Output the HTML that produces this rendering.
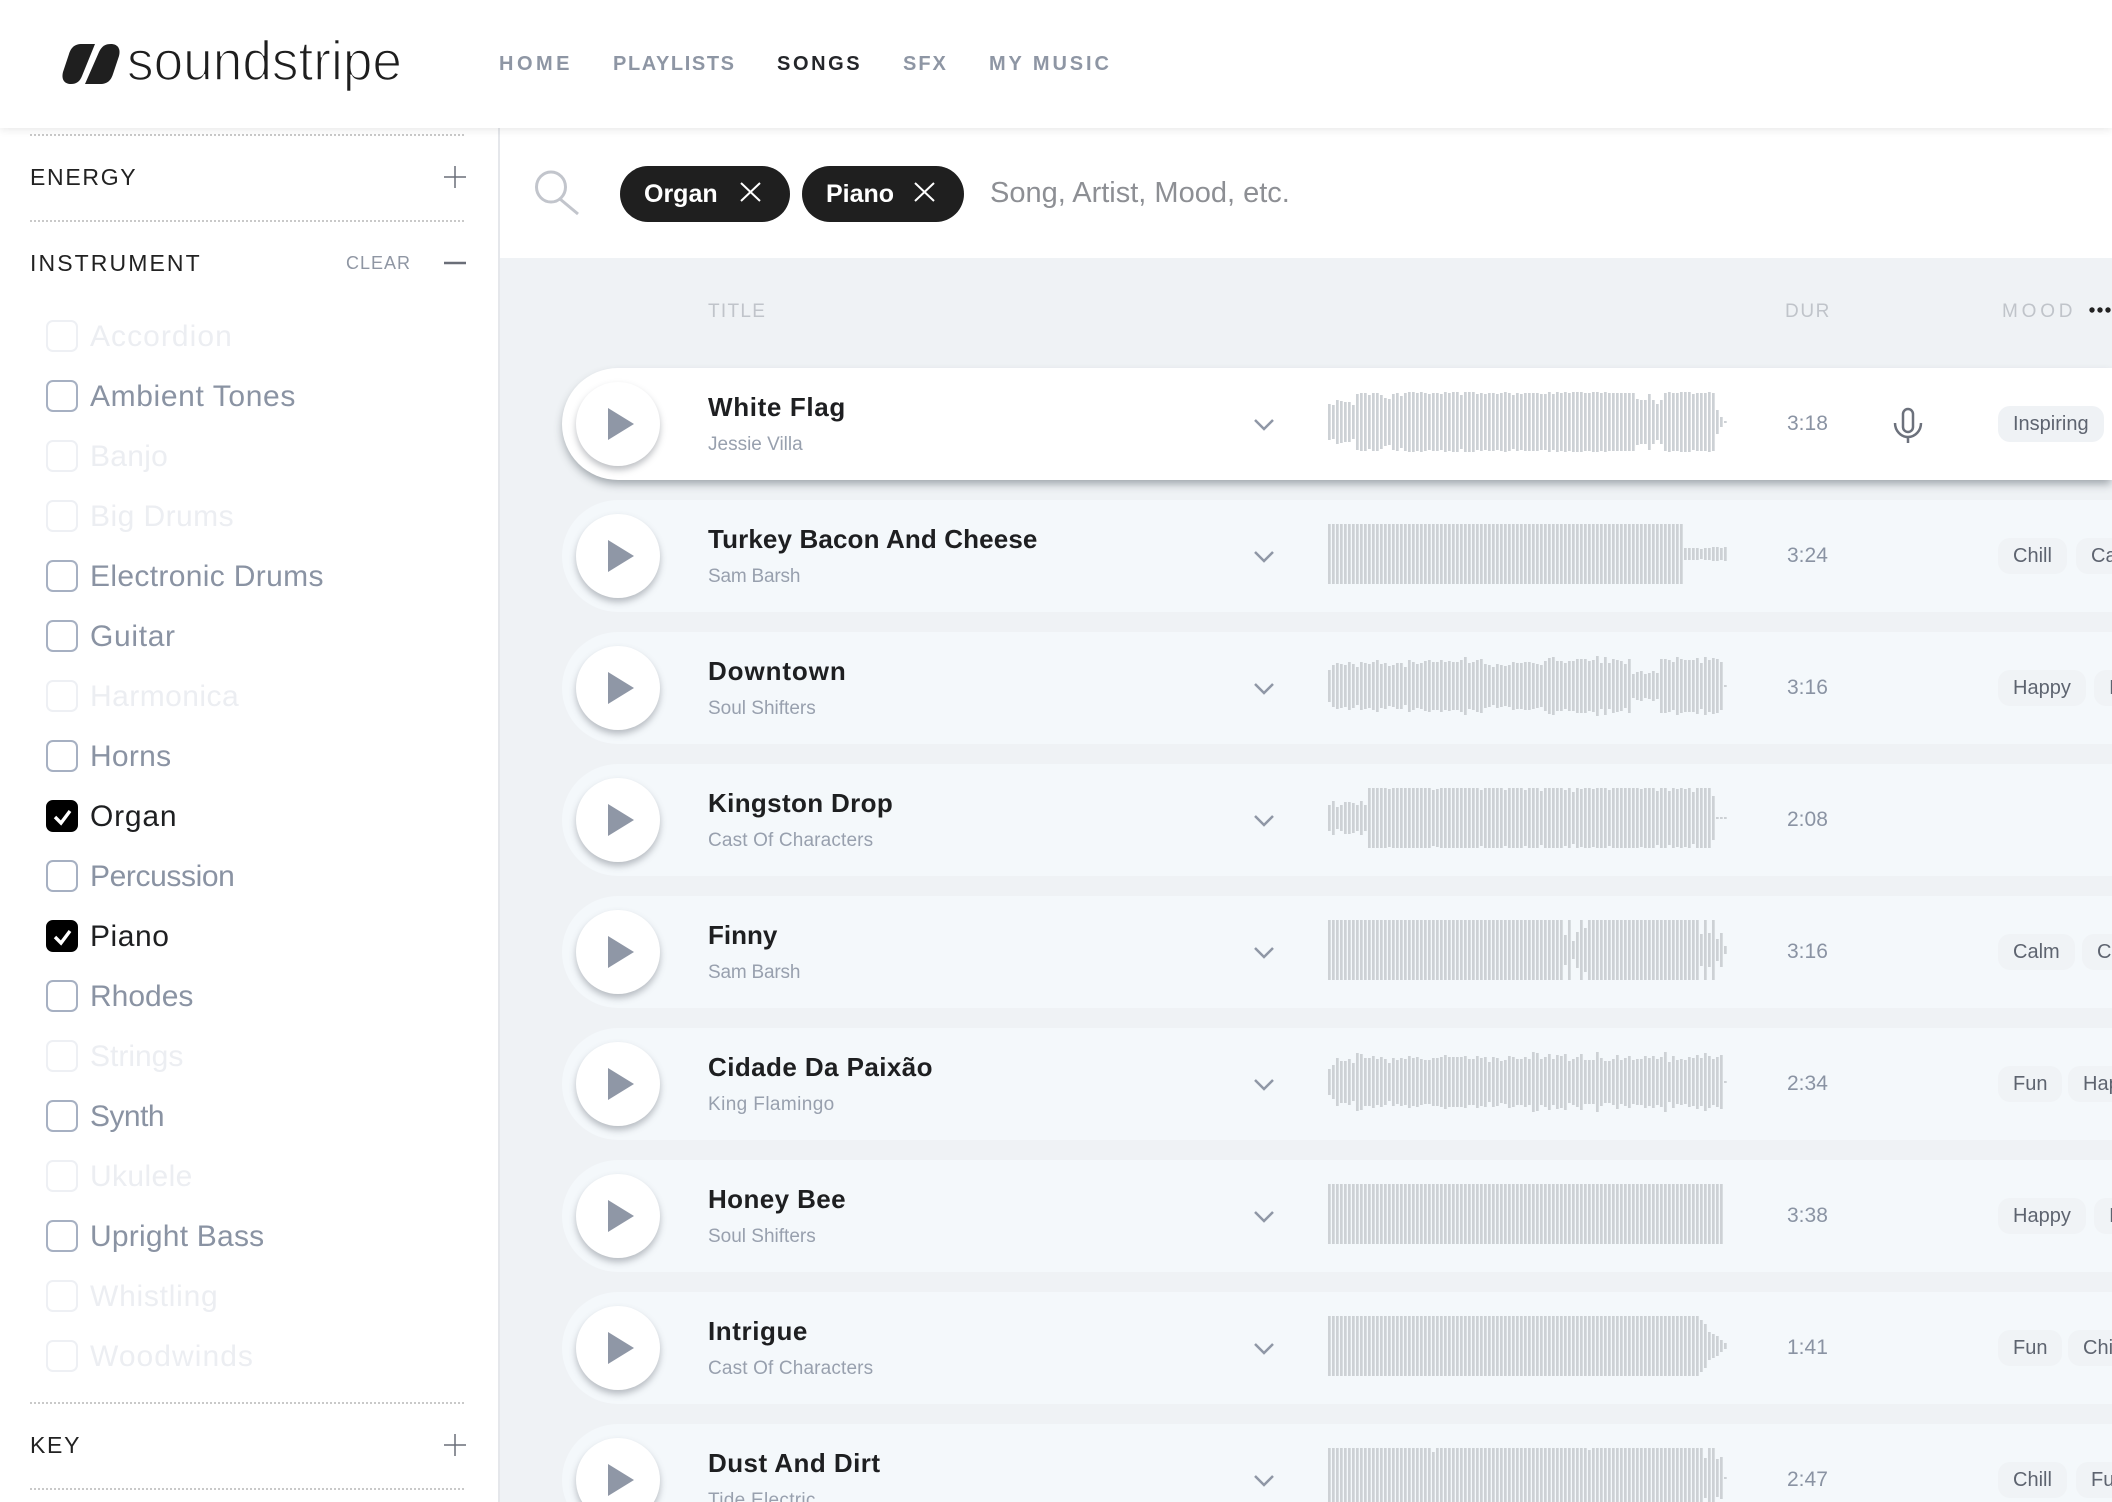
<!DOCTYPE html>
<html lang="en">
<head>
<meta charset="utf-8">
<title>Soundstripe Songs</title>
<style>
html,body{margin:0;padding:0;width:2112px;height:1502px;overflow:hidden;background:#fff;font-family:"Liberation Sans",Arial,sans-serif}
#page{position:relative;width:2112px;height:1502px;overflow:hidden;background:#eff2f5}
.t{position:absolute;white-space:nowrap;line-height:1}
#hdr{position:absolute;left:0;top:0;width:2112px;height:128px;background:#fff;box-shadow:0 2px 8px rgba(0,0,0,.09);z-index:5}
.nav{font-size:20px;font-weight:bold;color:#8e96a4;top:54px}
#side{position:absolute;left:0;top:128px;width:498px;height:1374px;background:#fff;border-right:2px solid #e5e7eb}
#bar{position:absolute;left:500px;top:128px;width:1612px;height:130px;background:#fff}
.dot{position:absolute;left:30px;width:436px;height:2px;background:repeating-linear-gradient(90deg,#c9c9c9 0 2px,transparent 2px 4px)}
.h{font-size:23px;letter-spacing:1.7px;color:#222;left:30px}
.box{position:absolute;left:46px;width:32px;height:32px;box-sizing:border-box;border:2px solid #a6b0c2;border-radius:7px}
.off{border-color:#eef0f4}
.on{background:#000;border-color:#000}
.i{font-size:30px;left:90px;color:#8a93a3}
.d{color:#eceef2}
.k{color:#1e1f21}
.chip{position:absolute;top:166px;height:56px;border-radius:28px;background:#1f1f1f}
.chip span{position:absolute;top:16px;font-size:25px;line-height:1;font-weight:bold;color:#fff;white-space:nowrap}
.th{font-size:19px;color:#c0c4ca;top:302px}
.row{position:absolute;left:562px;width:1550px;height:112px;border-radius:56px 0 0 56px;background:#f4f8fb}
.sel{background:#fff;box-shadow:0 5px 9px -1px rgba(60,70,80,.45)}
.c{position:absolute;left:14px;top:14px;width:84px;height:84px;border-radius:50%;background:#fff;box-shadow:0 4px 7px rgba(70,75,85,.35)}
.title{left:146px;top:26px;font-size:26px;font-weight:bold;color:#1e1f21}
.sub{left:146px;top:67px;font-size:19px;color:#98a0ae}
.dur{left:1225px;top:45px;font-size:21px;color:#8a93a3}
.tag{position:absolute;top:38px;height:36px;border-radius:12px;background:#f0f3f6;color:#5e6470;font-size:20px;line-height:36px;padding:0 15px;white-space:nowrap}
#ov{position:absolute;left:0;top:0;z-index:3}
.w{fill:none;stroke:#cdd1d5;stroke-width:2.7}
.f{fill:none;stroke:#cdd1d5;stroke-width:60;stroke-dasharray:2.7 1.3}
</style>
</head>
<body>
<div id="page">

<div id="hdr">
<svg width="500" height="128" style="position:absolute;left:0;top:0">
<path fill="#1f1f1f" d="M95 44L82 44C74 44 71 48 69 54L63 72C61 80 65 84 71 84C77 84 80 81 82 76Z"/>
<path fill="#1f1f1f" d="M85 84L100 84C108 84 111 80 113 74L119 56C121 48 117 44 111 44C105 44 102 46 99 52Z"/>
<text x="127" y="80" font-family="Liberation Sans, sans-serif" font-size="56" textLength="275" lengthAdjust="spacingAndGlyphs" fill="#1e1e1e" stroke="#fff" stroke-width="1.6">soundstripe</text>
</svg>
<div class="t nav" style="left:499px;letter-spacing:3.5px">HOME</div>
<div class="t nav" style="left:613px;letter-spacing:1.6px">PLAYLISTS</div>
<div class="t nav" style="left:777px;letter-spacing:2.6px;color:#24262a">SONGS</div>
<div class="t nav" style="left:903px;letter-spacing:2px">SFX</div>
<div class="t nav" style="left:989px;letter-spacing:2.9px">MY MUSIC</div>
</div>

<div id="side"></div>
<div id="bar"></div>

<div class="dot" style="top:134px"></div>
<div class="t h" style="top:166px">ENERGY</div>
<div class="dot" style="top:220px"></div>
<div class="t h" style="top:252px;letter-spacing:2.1px">INSTRUMENT</div>
<div class="t" style="left:346px;top:254px;font-size:18px;letter-spacing:1px;color:#8f96a3">CLEAR</div>

<div class="box off" style="top:320px"></div><div class="t i d" style="top:322px;letter-spacing:1.05px">Accordion</div>
<div class="box" style="top:380px"></div><div class="t i" style="top:382px;letter-spacing:.62px">Ambient Tones</div>
<div class="box off" style="top:440px"></div><div class="t i d" style="top:442px;letter-spacing:.27px">Banjo</div>
<div class="box off" style="top:500px"></div><div class="t i d" style="top:502px;letter-spacing:.45px">Big Drums</div>
<div class="box" style="top:560px"></div><div class="t i" style="top:562px;letter-spacing:.34px">Electronic Drums</div>
<div class="box" style="top:620px"></div><div class="t i" style="top:622px;letter-spacing:.67px">Guitar</div>
<div class="box off" style="top:680px"></div><div class="t i d" style="top:682px;letter-spacing:.45px">Harmonica</div>
<div class="box" style="top:740px"></div><div class="t i" style="top:742px;letter-spacing:.27px">Horns</div>
<div class="box on" style="top:800px"></div><div class="t i k" style="top:802px;letter-spacing:.8px">Organ</div>
<div class="box" style="top:860px"></div><div class="t i" style="top:862px;letter-spacing:-.4px">Percussion</div>
<div class="box on" style="top:920px"></div><div class="t i k" style="top:922px;letter-spacing:.54px">Piano</div>
<div class="box" style="top:980px"></div><div class="t i" style="top:982px">Rhodes</div>
<div class="box off" style="top:1040px"></div><div class="t i d" style="top:1042px">Strings</div>
<div class="box" style="top:1100px"></div><div class="t i" style="top:1102px;letter-spacing:-.54px">Synth</div>
<div class="box off" style="top:1160px"></div><div class="t i d" style="top:1162px;letter-spacing:.38px">Ukulele</div>
<div class="box" style="top:1220px"></div><div class="t i" style="top:1222px;letter-spacing:.22px">Upright Bass</div>
<div class="box off" style="top:1280px"></div><div class="t i d" style="top:1282px;letter-spacing:.75px">Whistling</div>
<div class="box off" style="top:1340px"></div><div class="t i d" style="top:1342px;letter-spacing:1.05px">Woodwinds</div>

<div class="dot" style="top:1402px"></div>
<div class="t h" style="top:1434px">KEY</div>
<div class="dot" style="top:1488px"></div>

<div class="chip" style="left:620px;width:170px"><span style="left:24px">Organ</span></div>
<div class="chip" style="left:802px;width:162px"><span style="left:24px">Piano</span></div>
<div class="t" style="left:990px;top:179px;font-size:29px;color:#8d8f94">Song, Artist, Mood, etc.</div>

<div class="t th" style="left:708px;letter-spacing:1.3px">TITLE</div>
<div class="t th" style="left:1785px;letter-spacing:1.6px">DUR</div>
<div class="t th" style="left:2002px;letter-spacing:3.8px">MOOD</div>

<div class="row sel" style="top:368px"><div class="c"></div><div class="t title" style="letter-spacing:.65px">White Flag</div><div class="t sub">Jessie Villa</div><div class="t dur">3:18</div><div class="tag" style="left:1436px;background:#eff2f5">Inspiring</div></div>
<div class="row" style="top:500px"><div class="c"></div><div class="t title" style="letter-spacing:.13px">Turkey Bacon And Cheese</div><div class="t sub" style="letter-spacing:-.2px">Sam Barsh</div><div class="t dur">3:24</div><div class="tag" style="left:1436px">Chill</div><div class="tag" style="left:1514px">Calm</div></div>
<div class="row" style="top:632px"><div class="c"></div><div class="t title" style="letter-spacing:.9px">Downtown</div><div class="t sub">Soul Shifters</div><div class="t dur">3:16</div><div class="tag" style="left:1436px">Happy</div><div class="tag" style="left:1532px">Inspiring</div></div>
<div class="row" style="top:764px"><div class="c"></div><div class="t title" style="letter-spacing:.35px">Kingston Drop</div><div class="t sub" style="letter-spacing:.15px">Cast Of Characters</div><div class="t dur">2:08</div></div>
<div class="row" style="top:896px"><div class="c"></div><div class="t title">Finny</div><div class="t sub" style="letter-spacing:-.2px">Sam Barsh</div><div class="t dur">3:16</div><div class="tag" style="left:1436px">Calm</div><div class="tag" style="left:1520px">Chill</div></div>
<div class="row" style="top:1028px"><div class="c"></div><div class="t title" style="letter-spacing:.42px">Cidade Da Paixão</div><div class="t sub" style="letter-spacing:.4px">King Flamingo</div><div class="t dur">2:34</div><div class="tag" style="left:1436px">Fun</div><div class="tag" style="left:1506px">Happy</div></div>
<div class="row" style="top:1160px"><div class="c"></div><div class="t title" style="letter-spacing:.4px">Honey Bee</div><div class="t sub">Soul Shifters</div><div class="t dur">3:38</div><div class="tag" style="left:1436px">Happy</div><div class="tag" style="left:1532px">Inspiring</div></div>
<div class="row" style="top:1292px"><div class="c"></div><div class="t title" style="letter-spacing:.58px">Intrigue</div><div class="t sub" style="letter-spacing:.15px">Cast Of Characters</div><div class="t dur">1:41</div><div class="tag" style="left:1436px">Fun</div><div class="tag" style="left:1506px">Chill</div></div>
<div class="row" style="top:1424px"><div class="c"></div><div class="t title" style="letter-spacing:.45px">Dust And Dirt</div><div class="t sub" style="letter-spacing:.3px">Tide Electric</div><div class="t dur">2:47</div><div class="tag" style="left:1436px">Chill</div><div class="tag" style="left:1514px">Fun</div></div>

<svg id="ov" width="2112" height="1502" viewBox="0 0 2112 1502">
<defs>
<g id="pc">
<path d="M608 40L634 56L608 72Z" fill="#8f97a6"/>
<path d="M1255 52L1264 61L1273 52" fill="none" stroke="#8f97a6" stroke-width="2.5"/>
</g>
</defs>

<!-- sidebar icons -->
<path d="M444 177H466M455 166V188" stroke="#6a6e78" stroke-width="1.5" fill="none"/>
<path d="M444 263H466" stroke="#6a6e78" stroke-width="2.5" fill="none"/>
<path d="M444 1445H466M455 1434V1456" stroke="#6a6e78" stroke-width="1.5" fill="none"/>
<path d="M55 817L61 823L70 811" fill="none" stroke="#fff" stroke-width="3.4"/>
<path d="M55 937L61 943L70 931" fill="none" stroke="#fff" stroke-width="3.4"/>

<!-- search -->
<ellipse cx="551" cy="187" rx="14.5" ry="15" fill="none" stroke="#c2c5cc" stroke-width="3"/>
<path d="M560 199L578 214" stroke="#c2c5cc" stroke-width="3" fill="none"/>
<path d="M741 183L760 201M760 183L741 201" stroke="#fff" stroke-width="2" fill="none"/>
<path d="M915 183L934 201M934 183L915 201" stroke="#fff" stroke-width="2" fill="none"/>

<!-- dots -->
<circle cx="2092" cy="310" r="2.7" fill="#222"/><circle cx="2100" cy="310" r="2.7" fill="#222"/><circle cx="2108" cy="310" r="2.7" fill="#222"/>

<!-- mic -->
<rect x="1903" y="409" width="10" height="23" rx="5" fill="none" stroke="#6c717c" stroke-width="2.5"/>
<path d="M1895 423a13 14 0 0 0 26 0M1908 437V443" fill="none" stroke="#6c717c" stroke-width="2.5"/>

<!-- play + chevrons -->
<use href="#pc" transform="translate(0 368)"/>
<use href="#pc" transform="translate(0 500)"/>
<use href="#pc" transform="translate(0 632)"/>
<use href="#pc" transform="translate(0 764)"/>
<use href="#pc" transform="translate(0 896)"/>
<use href="#pc" transform="translate(0 1028)"/>
<use href="#pc" transform="translate(0 1160)"/>
<use href="#pc" transform="translate(0 1292)"/>
<use href="#pc" transform="translate(0 1424)"/>

<!-- row 1 wave -->
<g transform="translate(1329.35 422)"><path class="w" d="M0-18V18M4-17V17M8-22V22M12-21V21M16-20V20M20-20V20M24-17V17M28-28V28M32-29V29M36-29V29M40-27V27M44-29V29M48-29V29M52-27V27M56-24V24M60-23V23M64-28V28M68-29V29M72-26V26M76-29V29M80-30V30M84-30V30M88-29V29M92-30V30M96-29V29M100-28V28M104-29V29M108-29V29M112-28V28M116-30V30M120-29V29M124-30V30M128-30V30M132-27V27M136-30V30M140-30V30M144-30V30M148-28V28M152-29V29M156-28V28M160-29V29M164-29V29M168-28V28M172-29V29M176-30V30M180-29V29M184-27V27M188-29V29M192-28V28M196-29V29M200-29V29M204-29V29M208-29V29M212-28V28M216-28V28M220-30V30M224-28V28M228-30V30M232-29V29M236-30V30M240-29V29M244-30V30M248-30V30M252-30V30M256-29V29M260-29V29M264-30V30M268-30V30M272-29V29M276-30V30M280-29V29M284-29V29M288-29V29M292-29V29M296-29V29M300-29V29M304-29V29M308-23V23M312-22V22M316-22V22M320-28V28M324-22V22M328-18V18M332-22V22M336-29V29M340-30V30M344-29V29M348-29V29M352-30V30M356-30V30M360-30V30M364-28V28M368-29V29M372-29V29M376-29V29M380-30V30M384-29V29M388-12V12M392-5V5M396-1V1"/></g>

<!-- row 2 wave -->
<g transform="translate(1329.35 554)"><path class="f" transform="translate(-1.35)" d="M0 0H356"/><path class="w" d="M356-6V6M360-6V6M364-6V6M368-6V6M372-5V5M376-6V6M380-6V6M384-7V7M388-7V7M392-6V6M396-7V7"/></g>

<!-- row 3 wave -->
<g transform="translate(1329.35 686)"><path class="w" d="M0-16V16M4-21V21M8-23V23M12-22V22M16-21V21M20-24V24M24-22V22M28-19V19M32-24V24M36-23V23M40-22V22M44-24V24M48-26V26M52-22V22M56-23V23M60-20V20M64-21V21M68-23V23M72-23V23M76-19V19M80-26V26M84-24V24M88-22V22M92-23V23M96-25V25M100-26V26M104-24V24M108-24V24M112-26V26M116-24V24M120-25V25M124-24V24M128-24V24M132-26V26M136-29V29M140-23V23M144-24V24M148-26V26M152-27V27M156-22V22M160-21V21M164-19V19M168-22V22M172-21V21M176-20V20M180-21V21M184-24V24M188-23V23M192-23V23M196-24V24M200-24V24M204-23V23M208-22V22M212-21V21M216-25V25M220-28V28M224-29V29M228-25V25M232-25V25M236-23V23M240-25V25M244-25V25M248-27V27M252-27V27M256-27V27M260-25V25M264-26V26M268-30V30M272-23V23M276-29V29M280-23V23M284-27V27M288-26V26M292-25V25M296-22V22M300-27V27M304-12V12M308-14V14M312-15V15M316-12V12M320-13V13M324-15V15M328-13V13M332-27V27M336-27V27M340-26V26M344-24V24M348-29V29M352-27V27M356-26V26M360-26V26M364-26V26M368-28V28M372-23V23M376-29V29M380-26V26M384-28V28M388-27V27M392-24V24M396-1V1"/></g>

<!-- row 4 wave -->
<g transform="translate(1329.35 818)"><path class="f" transform="translate(-1.35)" d="M40 0H60M64 0H104M112 0H152M156 0H176M180 0H196M200 0H212M216 0H236M240 0H244M248 0H252M256 0H264M268 0H280M284 0H312M316 0H328M332 0H340M344 0H348M352 0H356M360 0H364M368 0H384"/><path class="w" d="M0-13V13M4-17V17M8-11V11M12-13V13M16-16V16M20-16V16M24-15V15M28-13V13M32-17V17M36-13V13M60-29V29M104-28V28M108-29V29M152-28V28M176-28V28M196-28V28M212-27V27M236-28V28M244-26V26M252-29V29M264-29V29M280-28V28M312-29V29M328-27V27M340-27V27M348-29V29M356-29V29M364-26V26M384-22V22M388-1V1M392-1V1M396-1V1"/></g>

<!-- row 5 wave -->
<g transform="translate(1329.35 950)"><path class="f" transform="translate(-1.35)" d="M0 0H236M260 0H372"/><path class="w" d="M236-15V15M240-30V30M244-9V9M248-18V18M252-30V30M256-22V22M372-16V16M376-30V30M380-17V17M384-30V30M388-11V11M392-17V17M396-4V4"/></g>

<!-- row 6 wave -->
<g transform="translate(1329.35 1082)"><path class="w" d="M0-13V13M4-17V17M8-24V24M12-21V21M16-21V21M20-23V23M24-19V19M28-29V29M32-28V28M36-24V24M40-24V24M44-26V26M48-23V23M52-25V25M56-23V23M60-19V19M64-24V24M68-22V22M72-24V24M76-23V23M80-26V26M84-24V24M88-25V25M92-23V23M96-22V22M100-22V22M104-24V24M108-24V24M112-25V25M116-27V27M120-25V25M124-25V25M128-25V25M132-25V25M136-26V26M140-23V23M144-23V23M148-26V26M152-24V24M156-25V25M160-20V20M164-25V25M168-24V24M172-21V21M176-22V22M180-26V26M184-25V25M188-23V23M192-23V23M196-25V25M200-23V23M204-30V30M208-29V29M212-23V23M216-25V25M220-28V28M224-23V23M228-27V27M232-26V26M236-28V28M240-21V21M244-23V23M248-25V25M252-28V28M256-22V22M260-22V22M264-22V22M268-30V30M272-24V24M276-21V21M280-21V21M284-23V23M288-27V27M292-22V22M296-24V24M300-26V26M304-22V22M308-23V23M312-23V23M316-26V26M320-24V24M324-26V26M328-23V23M332-25V25M336-30V30M340-20V20M344-26V26M348-22V22M352-23V23M356-22V22M360-25V25M364-24V24M368-27V27M372-24V24M376-29V29M380-26V26M384-23V23M388-25V25M392-27V27M396-1V1"/></g>

<!-- row 7 wave -->
<g transform="translate(1329.35 1214)"><path class="f" transform="translate(-1.35)" d="M0 0H396"/></g>

<!-- row 8 wave -->
<g transform="translate(1329.35 1346)"><path class="f" transform="translate(-1.35)" d="M0 0H372"/><path class="w" d="M372-26V26M376-22V22M380-14V14M384-12V12M388-10V10M392-6V6M396-3V3"/></g>

<!-- row 9 wave -->
<g transform="translate(1329.35 1478)"><path class="f" transform="translate(-1.35)" d="M0 0H104M108 0H260M264 0H376"/><path class="w" d="M104-26V26M260-28V28M376-20V20M380-30V30M384-30V30M388-19V19M392-21V21M396-1V1"/></g>
</svg>

</div>
</body>
</html>
